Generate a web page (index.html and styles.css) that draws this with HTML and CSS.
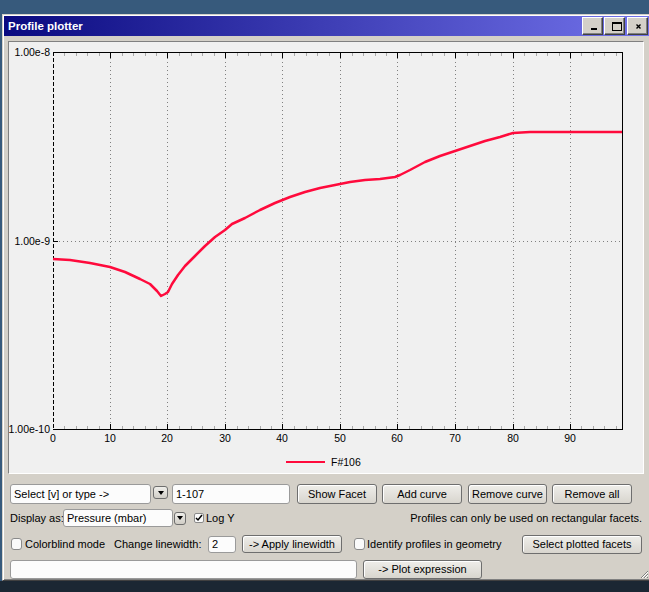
FILE: index.html
```html
<!DOCTYPE html>
<html lang="en">
<head>
    <meta charset="UTF-8">
    <title>Profile plotter</title>
    <link rel="stylesheet" href="styles.css">
</head>
<body>

    <div class="window">
        <div class="titlebar">
            <span class="title">Profile plotter</span>
            <div class="title-btns">
                <div class="tbtn">
                    <svg width="19" height="16"><rect x="8" y="10" width="6" height="2" fill="#000"/></svg>
                </div>
                <div class="tbtn">
                    <svg width="19" height="16"><rect x="7.5" y="4.5" width="9" height="8" fill="none" stroke="#000"/><rect x="7" y="4" width="10" height="2" fill="#000"/></svg>
                </div>
                <div class="tbtn close">
                    <svg width="19" height="16"><path d="M8.5 6.5l4 4M12.5 6.5l-4 4" stroke="#000" stroke-width="1.4"/></svg>
                </div>
            </div>
        </div>

        <!-- Chart -->
        <div class="plot">
            <svg class="chart" width="634" height="431" viewBox="9 42 634 431">
                <defs>
                    <path id="minor" d="M64.5 53v3M76.5 53v3M87.5 53v3M99.5 53v3M122.5 53v3M133.5 53v3M145.5 53v3M156.5 53v3M179.5 53v3M191.5 53v3M202.5 53v3M214.5 53v3M237.5 53v3M248.5 53v3M260.5 53v3M271.5 53v3M294.5 53v3M306.5 53v3M317.5 53v3M329.5 53v3M352.5 53v3M363.5 53v3M375.5 53v3M386.5 53v3M409.5 53v3M421.5 53v3M432.5 53v3M444.5 53v3M467.5 53v3M478.5 53v3M490.5 53v3M501.5 53v3M524.5 53v3M536.5 53v3M547.5 53v3M559.5 53v3M581.5 53v3M593.5 53v3M604.5 53v3M616.5 53v3"/>
                    <path id="major" d="M110.5 53v5M167.5 53v5M225.5 53v5M282.5 53v5M340.5 53v5M397.5 53v5M455.5 53v5M513.5 53v5M570.5 53v5"/>
                </defs>

                <g class="grid">
                    <path d="M110.5 58V424M167.5 58V424M225.5 58V424M282.5 58V424M340.5 58V424M397.5 58V424M455.5 58V424M513.5 58V424M570.5 58V424"/>
                    <path d="M59 241.5H622"/>
                </g>

                <g class="minor-ticks">
                    <use href="#minor"/>
                    <use href="#minor" transform="translate(0 373)"/>
                </g>
                <g class="axis">
                    <use href="#major"/>
                    <use href="#major" transform="translate(0 371)"/>
                    <path d="M53 52.5H623M53 429.5H623M622.5 52V430M53 241.5h5"/>
                    <path class="dashed" d="M53.5 52V430"/>
                </g>

                <g class="ylabels">
                    <text x="50" y="56">1.00e-8</text>
                    <text x="50" y="245">1.00e-9</text>
                    <text x="50" y="433">1.00e-10</text>
                </g>
                <g class="xlabels">
                    <text x="53" y="442">0</text>
                    <text x="110" y="442">10</text>
                    <text x="167" y="442">20</text>
                    <text x="225" y="442">30</text>
                    <text x="282" y="442">40</text>
                    <text x="340" y="442">50</text>
                    <text x="397" y="442">60</text>
                    <text x="455" y="442">70</text>
                    <text x="513" y="442">80</text>
                    <text x="570" y="442">90</text>
                </g>

                <polyline class="curve" points="53,259 70,260 90,263 110,267 125,272 140,279 150,284 157,291 161,296 165,294 168,292 172,284 178,275 185,266 195,256 205,246 215,237 225,230 232,224 245,218 260,210 275,203 290,197 305,192 320,188 335,185 350,182 365,180 380,179 395,177 400,175 410,170 425,162 440,156 455,151 470,146 485,141 500,137 513,133 530,132 622,132"/>

                <path class="curve legend" d="M286 462H325"/>
                <text class="legend-text" x="331" y="466">F#106</text>
            </svg>
        </div>

        <!-- Controls -->
        <div class="controls">
            <div class="row row1">
                <div class="field sel">Select [v] or type -&gt;</div>
                <div class="drop"><span class="arrow"></span></div>
                <div class="field range">1-107</div>
                <div class="btn show">Show Facet</div>
                <div class="btn add">Add curve</div>
                <div class="btn remove">Remove curve</div>
                <div class="btn remove-all">Remove all</div>
            </div>

            <div class="row row2">
                <span class="lbl-display">Display as:</span>
                <div class="field mode">Pressure (mbar)</div>
                <div class="drop small"><span class="arrow"></span></div>
                <div class="check checked">
                    <svg width="8" height="8"><path d="M1 4l2 2 4-5" fill="none" stroke="#000" stroke-width="1.5"/></svg>
                </div>
                <span class="cb-label">Log Y</span>
                <span class="note">Profiles can only be used on rectangular facets.</span>
            </div>

            <div class="row row3">
                <div class="check round first"></div>
                <span class="cb-label colorblind">Colorblind mode</span>
                <span class="lbl-width">Change linewidth:</span>
                <div class="field width-input">2</div>
                <div class="btn apply">-&gt; Apply linewidth</div>
                <div class="check round identify"></div>
                <span class="cb-label">Identify profiles in geometry</span>
                <div class="btn select-plotted">Select plotted facets</div>
            </div>

            <div class="row row4">
                <div class="field expr"></div>
                <div class="btn plot-expr">-&gt; Plot expression</div>
            </div>
        </div>

        <svg class="grip" width="7" height="7">
            <path d="M7 0L0 7M7 3L3 7M7 6L6 7" stroke="#808080"/>
            <path d="M7 1L1 7M7 4L4 7" stroke="#fff"/>
        </svg>
    </div>

    <div class="taskbar"></div>

</body>
</html>
```

FILE: styles.css
```css
* {
    box-sizing: border-box;
}
body {
    margin: 0;
    width: 649px;
    height: 592px;
    overflow: hidden;
    background-color: #375a7c;
    font-family: 'Liberation Sans', Arial, sans-serif;
    font-size: 11px;
    color: #000;
}
.window {
    position: relative;
    width: 650px;
    height: 567px;
    margin: 14px 0 0 2px;
    padding: 1px;
    display: flex;
    flex-direction: column;
    background-color: #d4d0c8;
    border: 1px solid;
    border-color: #d4d0c8 #404040 #404040 #d4d0c8;
    box-shadow: inset 1px 1px #fff, inset -1px -1px #808080;
}
/* Title bar */
.titlebar {
    height: 20px;
    display: flex;
    align-items: center;
    padding: 0 2px 0 4px;
    background: linear-gradient(90deg, #0a0a80, #7272ea);
    color: #fff;
    font-weight: bold;
    font-size: 11.5px;
}
.title-btns {
    margin-left: auto;
    display: flex;
    gap: 1px;
}
.tbtn {
    width: 21px;
    height: 18px;
    background-color: #d4d0c8;
    border: 1px solid;
    border-color: #fff #404040 #404040 #fff;
    box-shadow: inset -1px -1px #808080;
}
.tbtn svg {
    display: block;
}
.tbtn.close {
    margin-left: 1px;
}
/* Plot panel */
.plot {
    width: 636px;
    height: 433px;
    margin: 5px 0 0 4px;
    background-color: #f0f0f0;
    border: 1px solid;
    border-color: #808080 #fff #fff #808080;
}
.chart {
    display: block;
    font-family: 'Liberation Sans', Arial, sans-serif;
    font-size: 10.5px;
}
.grid path {
    fill: none;
    stroke: #808080;
    stroke-dasharray: 1 3;
}
.minor-ticks use {
    stroke: #a8a8a8;
}
.axis use,
.axis path {
    fill: none;
    stroke: #000;
}
.axis .dashed {
    stroke-dasharray: 4 2;
}
.ylabels text {
    text-anchor: end;
}
.xlabels text {
    text-anchor: middle;
}
.curve {
    fill: none;
    stroke: #ff0a3c;
    stroke-width: 2.5;
    stroke-linejoin: round;
}
.curve.legend {
    stroke-width: 2;
}
/* Controls */
.controls {
    padding: 0 8px 0 6px;
}
.row {
    display: flex;
    align-items: center;
}
.row1 {
    margin-top: 10px;
    height: 20px;
    align-items: flex-start;
}
.row2 {
    margin-top: 5px;
    height: 18px;
}
.row3 {
    margin-top: 7px;
    height: 20px;
}
.row4 {
    margin-top: 5px;
    height: 20px;
}
.field {
    display: flex;
    align-items: center;
    padding-left: 3px;
    background-color: #fcfcfc;
    border: 1px solid #9a9a9a;
    border-radius: 3px;
    white-space: nowrap;
}
.btn {
    display: flex;
    align-items: center;
    justify-content: center;
    background: linear-gradient(#efeeea, #d8d5ce);
    border: 1px solid #6e6e6e;
    border-radius: 3px;
    box-shadow: inset 1px 1px #fff;
    white-space: nowrap;
}
.drop {
    display: flex;
    align-items: center;
    justify-content: center;
    width: 15px;
    height: 13px;
    margin: 2px 0 0 2px;
    background: linear-gradient(#efeeea, #d0cdc6);
    border: 1px solid #6e6e6e;
    border-radius: 3px;
}
.drop.small {
    width: 12px;
    margin: 0 0 0 1px;
}
.arrow {
    width: 0;
    height: 0;
    border-left: 3px solid transparent;
    border-right: 3px solid transparent;
    border-top: 4px solid #000;
}
.sel {
    width: 141px;
    height: 20px;
}
.range {
    width: 118px;
    height: 20px;
    margin-left: 4px;
}
.row1 .btn {
    width: 80px;
    height: 20px;
    margin-left: 5px;
}
.row1 .show {
    margin-left: 7px;
}
.row1 .remove {
    width: 79px;
    margin-left: 6px;
}
.lbl-display {
    width: 53px;
    white-space: nowrap;
}
.mode {
    width: 110px;
    height: 18px;
}
.check {
    display: flex;
    align-items: center;
    justify-content: center;
    width: 10px;
    height: 10px;
    background-color: #fafafa;
    border: 1px solid #8a8a8a;
    border-radius: 2px;
}
.row2 .check {
    margin-left: 8px;
}
.cb-label {
    margin-left: 2px;
    white-space: nowrap;
}
.note {
    margin-left: auto;
    white-space: nowrap;
}
.check.round {
    width: 11px;
    height: 12px;
    border-radius: 3px;
}
.check.first {
    margin-left: 1px;
}
.colorblind {
    width: 89px;
    margin-left: 3px;
}
.lbl-width {
    width: 94px;
    white-space: nowrap;
}
.width-input {
    width: 28px;
    height: 17px;
}
.apply {
    width: 100px;
    height: 18px;
    margin-left: 6px;
}
.identify {
    margin-left: 12px;
}
.select-plotted {
    width: 120px;
    height: 19px;
    margin-left: auto;
}
.expr {
    width: 347px;
    height: 19px;
}
.plot-expr {
    width: 119px;
    height: 19px;
    margin-left: 6px;
}
.grip {
    position: absolute;
    right: 3px;
    bottom: 2px;
}
.taskbar {
    height: 11px;
    background-color: #1b2733;
}
```
